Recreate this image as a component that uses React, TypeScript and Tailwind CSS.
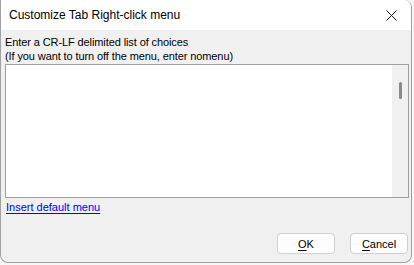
export default function App() {
  return (
    <div className="w-[414px] h-[265px] bg-[#f7f7f7] overflow-hidden font-['Liberation_Sans',Arial,sans-serif] text-black">
      <div className="w-[412px] h-[263px] flex flex-col border-l border-r border-b border-[#a0a0a0] rounded-tr-[8px] rounded-b-[8px] overflow-hidden bg-[#f0f0f0]">
        <div className="h-[30px] shrink-0 bg-white flex items-center justify-between pl-[8px] pr-[14px]">
          <span className="text-[12px] leading-[14px]">Customize Tab Right-click menu</span>
          <svg width="11" height="11" viewBox="0 0 11 11" className="block">
            <path d="M0.5 0.5 L10.5 10.5 M10.5 0.5 L0.5 10.5" stroke="#1a1a1a" strokeWidth="1" fill="none" />
          </svg>
        </div>
        <div className="flex-1 flex flex-col pl-[4px] pr-[2px]">
          <div className="pt-[5px] text-[11px] leading-[14px] tracking-[-0.1px]">
            <div>Enter a CR-LF delimited list of choices</div>
            <div>(If you want to turn off the menu, enter nomenu)</div>
          </div>
          <div className="mt-[1px] h-[134px] border border-[#a0a0a0] bg-white flex justify-end">
            <div className="w-[16px] bg-[#f0f0f0] flex justify-center">
              <div className="mt-[17px] w-[3px] h-[17px] rounded-full bg-[#8a8a8a]" />
            </div>
          </div>
          <div className="mt-[2px] pl-[1px] text-[11px] leading-[14px]">
            <span className="text-[#0000ff] underline underline-offset-[2px] cursor-pointer">Insert default menu</span>
          </div>
          <div className="mt-auto mb-[8px] pr-[1px] flex justify-end gap-[15px]">
            <button className="w-[58px] h-[21px] bg-[#fdfdfd] border border-[#d0d0d0] rounded-[4px] text-[11px] leading-[14px]">
              <span className="underline underline-offset-[2px]">O</span>K
            </button>
            <button className="w-[58px] h-[21px] bg-[#fdfdfd] border border-[#d0d0d0] rounded-[4px] text-[11px] leading-[14px]">
              <span className="underline underline-offset-[2px]">C</span>ancel
            </button>
          </div>
        </div>
      </div>
    </div>
  );
}
